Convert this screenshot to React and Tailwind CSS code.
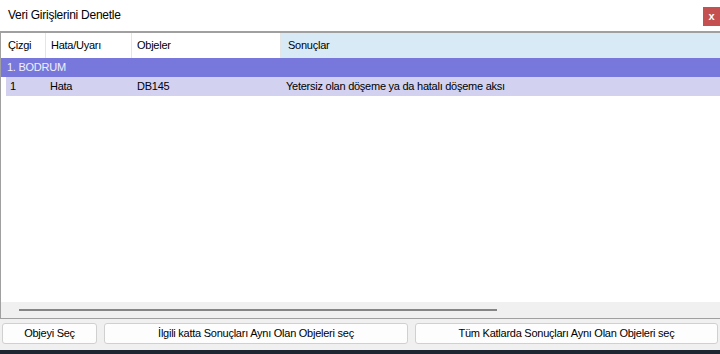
export default function App() {
  const font = { fontFamily: '"Liberation Sans", Arial, sans-serif' };
  return (
    <div className="w-[720px] h-[354px] bg-white flex flex-col overflow-hidden text-[11px] tracking-[-0.25px] text-black" style={font}>
      {/* title bar */}
      <div className="h-[31px] flex items-start justify-between bg-white">
        <div className="pl-[8px] pt-[7px] leading-[16px] text-[12px]">Veri Girişlerini Denetle</div>
        <div className="mt-[7px] w-[17px] h-[19px] bg-[#c4504f] text-white text-[11px] font-bold flex items-center justify-center leading-none tracking-normal">x</div>
      </div>
      {/* list area */}
      <div className="flex-1 flex flex-col border-t-[2px] border-l border-[#a0a0a0] border-b border-b-[#a0a0a0]">
        {/* header */}
        <div className="h-[25px] flex items-stretch">
          <div className="w-[45px] pl-[7px] flex items-center border-r border-[#e5e5e5]">Çizgi</div>
          <div className="w-[86px] pl-[5px] flex items-center border-r border-[#e5e5e5]">Hata/Uyarı</div>
          <div className="w-[149px] pl-[5px] flex items-center border-r border-[#e5e5e5]">Objeler</div>
          <div className="flex-1 pl-[7px] flex items-center bg-[#d9eaf7]">Sonuçlar</div>
        </div>
        {/* group row */}
        <div className="h-[19px] bg-[#7878dc] text-[#f0f0fa] pl-[6px] flex items-center">1. BODRUM</div>
        {/* data row */}
        <div className="h-[19px] ml-[5px] bg-[#d2d2f0] flex items-center">
          <div className="w-[40px] pl-[4px]">1</div>
          <div className="w-[86px] pl-[4px]">Hata</div>
          <div className="w-[149px] pl-[5px]">DB145</div>
          <div className="flex-1 pl-[5px]">Yetersiz olan döşeme ya da hatalı döşeme aksı</div>
        </div>
        <div className="flex-1" />
        {/* scrollbar */}
        <div className="h-[16px] bg-[#f0f0f0] flex items-center">
          <div className="ml-[18px] w-[478px] h-[2px] bg-[#858585]" />
        </div>
      </div>
      {/* buttons */}
      <div className="h-[31px] bg-[#f0f0f0] flex items-start gap-[7px] pt-[4px] px-[2px]">
        <button className="w-[95px] h-[21px] bg-[#fdfdfd] border border-[#d0d0d0] rounded-[3px] text-[11px] leading-none">Objeyi Seç</button>
        <button className="w-[304px] h-[21px] bg-[#fdfdfd] border border-[#d0d0d0] rounded-[3px] text-[11px] leading-none">İlgili katta Sonuçları Aynı Olan Objeleri seç</button>
        <button className="flex-1 h-[21px] bg-[#fdfdfd] border border-[#d0d0d0] rounded-[3px] text-[11px] leading-none">Tüm Katlarda Sonuçları Aynı Olan Objeleri seç</button>
      </div>
      <div className="h-[4px] bg-[#1d2631]" />
    </div>
  );
}
